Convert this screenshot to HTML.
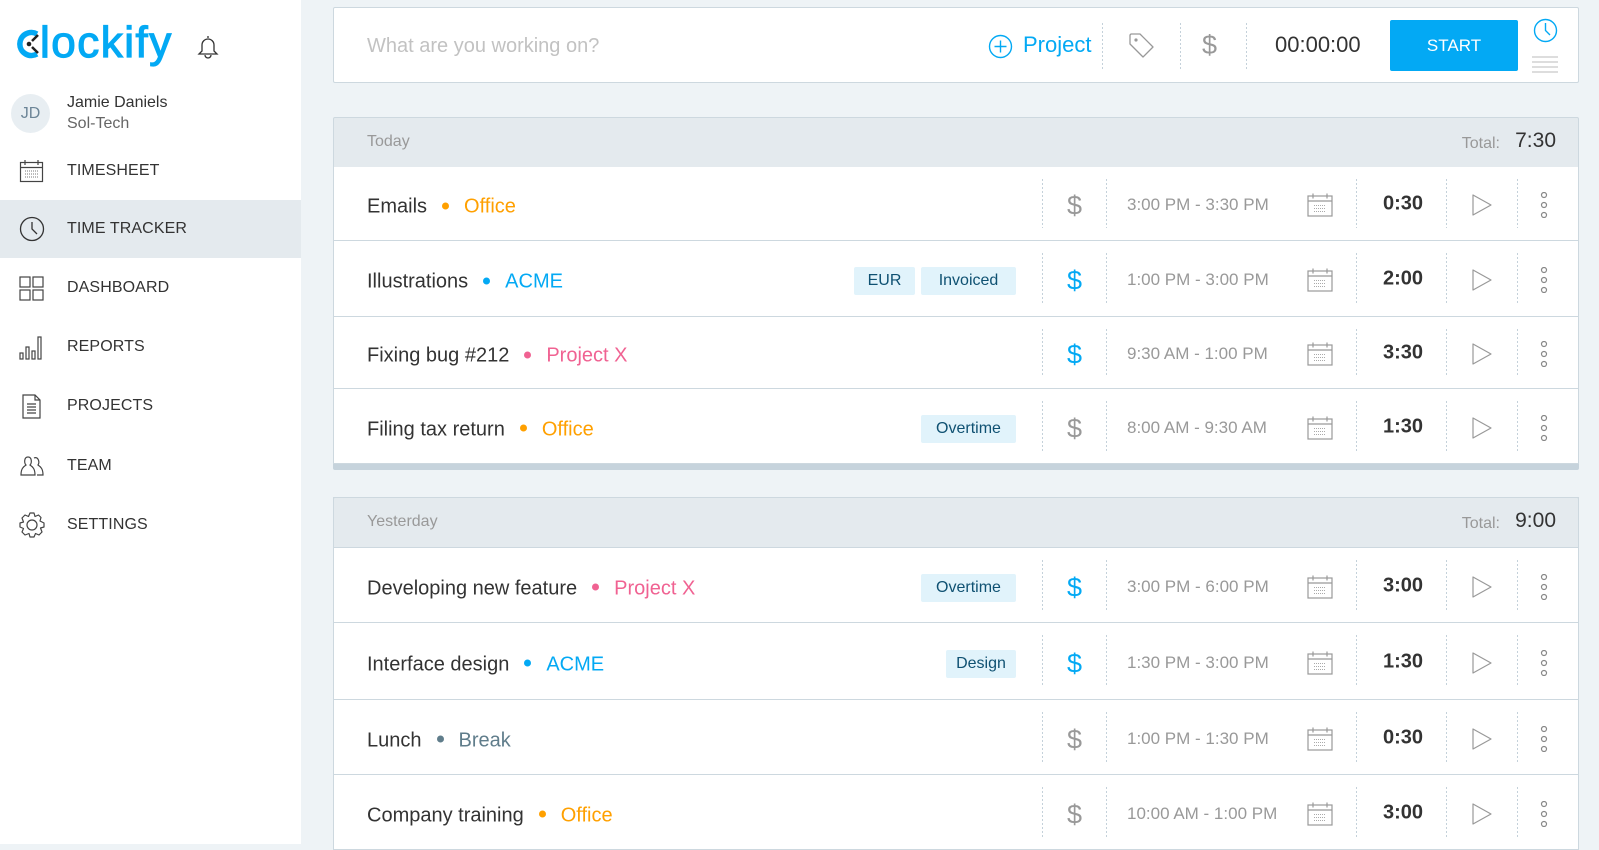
<!DOCTYPE html>
<html><head><meta charset="utf-8">
<style>
*{box-sizing:border-box;margin:0;padding:0}
body{width:1599px;height:844px;overflow:hidden;background:#eef3f6;font-family:"Liberation Sans",sans-serif;position:relative;color:#333}
.side{position:absolute;left:0;top:0;width:301px;height:844px;background:#fff}
.abs{position:absolute}
.nav{position:absolute;left:0;width:301px;height:58px;display:flex;align-items:center}
.nav span{position:absolute;left:67px;font-size:16px;color:#333;letter-spacing:.1px}
.nav svg{position:absolute;left:19px}
.card{position:absolute;left:333px;width:1246px;background:#fff;border:1px solid #cdd8df}
.hdr{position:absolute;left:333px;width:1246px;height:51px;background:#e4eaee;border:1px solid #cdd8df;border-radius:2px 2px 0 0}
.hdr .t{position:absolute;left:33px;top:15px;font-size:16px;color:#999}
.hdr .tot{position:absolute;right:78px;top:17px;font-size:16px;color:#999}
.hdr .tv{position:absolute;right:22px;top:11px;font-size:21px;color:#333}
.row{position:absolute;left:333px;width:1246px;background:#fff;border:1px solid #cdd8df;border-top:none}
.row .d{position:absolute;left:33px;font-size:20px;color:#333;white-space:nowrap;transform:translateY(-50%)}
.dot{display:inline-block;width:7px;height:7px;border-radius:50%;margin:0 15px 3px 15px;vertical-align:middle}
.vd{position:absolute;top:12px;bottom:12px;width:1px;background:repeating-linear-gradient(to bottom,#c4d1da 0 2px,transparent 2px 4px)}
.tm{position:absolute;left:793px;font-size:17px;color:#999;transform:translateY(-50%);white-space:nowrap}
.dur{position:absolute;left:1023px;width:92px;text-align:center;font-size:20px;font-weight:bold;color:#333;transform:translateY(-50%)}
.tag{position:absolute;height:28px;line-height:28px;background:#e1f3fb;color:#0f5172;font-size:16px;text-align:center;border-radius:2px;transform:translateY(-50%)}
.ic{position:absolute;transform:translateY(-50%)}
</style></head><body>
<div class="side">
  <div class="abs" style="left:15px;top:18px;font-size:44px;color:#03a9f4;letter-spacing:1.5px;white-space:nowrap">
    <svg width="28" height="30" viewBox="0 0 28 30" style="vertical-align:-2px;margin-right:-3px"><path d="M22 5 A11.5 11.5 0 1 0 22 25" fill="none" stroke="#03a9f4" stroke-width="5.5"/><circle cx="14" cy="15" r="2.3" fill="#222"/><path d="M17 12 L23 6 M17 18 L23 24" stroke="#222" stroke-width="2.5"/></svg><span style="-webkit-text-stroke:1.2px #03a9f4">lockify</span>
  </div>
  <svg class="abs" style="left:197px;top:34px" width="22" height="25" viewBox="0 0 22 25"><path d="M11 2 V4 M5 17 V11 A6 6 0 0 1 17 11 V17 L20 20 H2 Z M8 21 A3 3 0 0 0 14 21" fill="none" stroke="#333" stroke-width="1.3"/></svg>
  <div class="abs" style="left:11px;top:94px;width:39px;height:39px;border-radius:50%;background:#e8eef2;color:#6c8597;font-size:16px;text-align:center;line-height:39px">JD</div>
  <div class="abs" style="left:67px;top:94px;font-size:16px;color:#333">Jamie Daniels</div>
  <div class="abs" style="left:67px;top:115px;font-size:16px;color:#666">Sol-Tech</div>
  <div class="nav" style="top:142px"><svg width="25" height="24" viewBox="0 0 25 24"><rect x="1.5" y="3.5" width="22" height="19" fill="none" stroke="#444" stroke-width="1.2"/><path d="M1.5 8.5H23.5M6 1V6M19 1V6" stroke="#444" stroke-width="1.2"/><path d="M6 12h13M6 15h13M6 18h13" stroke="#777" stroke-width="1" stroke-dasharray="1 1"/></svg><span>TIMESHEET</span></div>
  <div class="nav" style="top:200px;background:#e4eaee"><svg width="26" height="26" viewBox="0 0 26 26"><circle cx="13" cy="13" r="11.5" fill="none" stroke="#333" stroke-width="1.3"/><path d="M13 6V13L18 18" fill="none" stroke="#333" stroke-width="1.3"/></svg><span>TIME TRACKER</span></div>
  <div class="nav" style="top:259px"><svg width="25" height="25" viewBox="0 0 25 25"><g fill="none" stroke="#444" stroke-width="1.2"><rect x="1" y="1" width="10" height="10"/><rect x="14" y="1" width="10" height="10"/><rect x="1" y="14" width="10" height="10"/><rect x="14" y="14" width="10" height="10"/></g></svg><span>DASHBOARD</span></div>
  <div class="nav" style="top:318px"><svg width="25" height="25" viewBox="0 0 25 25"><g fill="none" stroke="#444" stroke-width="1.2"><rect x="1" y="18" width="3" height="6"/><rect x="7" y="12" width="3" height="12"/><rect x="13" y="16" width="3" height="8"/><rect x="19" y="2" width="3" height="22"/></g></svg><span>REPORTS</span></div>
  <div class="nav" style="top:377px"><svg width="25" height="25" viewBox="0 0 25 25"><path d="M4 1H16L21 6V24H4Z M16 1V6H21 M8 10H17M8 13H17M8 16H17M8 19H17" fill="none" stroke="#444" stroke-width="1.2"/></svg><span>PROJECTS</span></div>
  <div class="nav" style="top:437px"><svg width="26" height="24" viewBox="0 0 26 24"><path d="M9 3C5 3 5 9 7 11C4 13 2 15 2 21H16C16 15 14 13 11 11C13 9 13 3 9 3Z M15 4C19 2 21 8 19 11C22 13 24 15 24 21H18" fill="none" stroke="#444" stroke-width="1.2"/></svg><span>TEAM</span></div>
  <div class="nav" style="top:496px"><svg width="26" height="26" viewBox="0 0 26 26"><circle cx="13" cy="13" r="5" fill="none" stroke="#444" stroke-width="1.2"/><path d="M11 1H15L16 4.5L19.5 3L22 5.5L21 9L25 11V15L21.5 16L23 20L20 23L16.5 21.5L15 25H11L10 21.5L6 23L3 20L4.5 16.5L1 15V11L4.5 10L3 6L6 3L9.5 4.5Z" fill="none" stroke="#444" stroke-width="1.2" stroke-linejoin="round"/></svg><span>SETTINGS</span></div>
</div>

<!-- top input -->
<div class="card" style="top:7px;height:76px;border-radius:2px">
  <div class="abs" style="left:33px;top:27px;font-size:20px;color:#c2c2c2">What are you working on?</div>
  <svg class="abs" style="left:654px;top:26px" width="25" height="25" viewBox="0 0 25 25"><circle cx="12.5" cy="12.5" r="11" fill="none" stroke="#03a9f4" stroke-width="1.4"/><path d="M12.5 6.5V18.5M6.5 12.5H18.5" stroke="#03a9f4" stroke-width="1.4"/></svg>
  <div class="abs" style="left:689px;top:24px;font-size:22px;color:#03a9f4">Project</div>
  <div class="vd" style="left:768px;top:15px;bottom:12px"></div>
  <svg class="abs" style="left:794px;top:24px" width="28" height="28" viewBox="0 0 28 28"><path d="M2 3V12L15 25L25 15L12 2H3Z" fill="none" stroke="#999" stroke-width="1.3" stroke-linejoin="round"/><circle cx="8" cy="8" r="1.6" fill="#999"/></svg>
  <div class="vd" style="left:846px;top:15px;bottom:12px"></div>
  <div class="abs" style="left:868px;top:22px;font-size:27px;color:#999">$</div>
  <div class="vd" style="left:912px;top:15px;bottom:12px"></div>
  <div class="abs" style="left:941px;top:24px;font-size:22px;color:#333">00:00:00</div>
  <div class="abs" style="left:1056px;top:12px;width:128px;height:51px;background:#03a9f4;border-radius:2px;color:#fff;font-size:17px;text-align:center;line-height:51px">START</div>
  <svg class="abs" style="left:1199px;top:10px" width="25" height="25" viewBox="0 0 25 25"><circle cx="12.5" cy="12.5" r="11" fill="none" stroke="#03a9f4" stroke-width="1.4"/><path d="M12.5 5V12.5L17 17" fill="none" stroke="#03a9f4" stroke-width="1.4"/></svg>
  <svg class="abs" style="left:1198px;top:48px" width="26" height="18" viewBox="0 0 26 18"><path d="M0 1H26M0 6H26M0 11H26M0 16H26" stroke="#bbb" stroke-width="1"/></svg>
</div>

<!-- Today -->
<div class="hdr" style="top:117px"><div class="t">Today</div><div class="tot">Total:</div><div class="tv">7:30</div></div>
<div class="abs" style="left:333px;top:464px;width:1246px;height:6px;background:#c6d3dc;border-radius:0 0 2px 2px"></div>
<div class="abs" style="left:333px;top:497px;width:1246px;height:350px;background:#cdd8df"></div>
<div class="hdr" style="top:497px"><div class="t">Yesterday</div><div class="tot">Total:</div><div class="tv">9:00</div></div>

<script>
const rows=[
[167,74,"Emails","#ffa000","Office",[],false,"3:00 PM - 3:30 PM","0:30"],
[241,76,"Illustrations","#03a9f4","ACME",[["EUR",520,61],["Invoiced",587,95]],true,"1:00 PM - 3:00 PM","2:00"],
[317,72,"Fixing bug #212","#f06292","Project X",[],true,"9:30 AM - 1:00 PM","3:30"],
[389,75,"Filing tax return","#ffa000","Office",[["Overtime",587,95]],false,"8:00 AM - 9:30 AM","1:30"],
[548,75,"Developing new feature","#f06292","Project X",[["Overtime",587,95]],true,"3:00 PM - 6:00 PM","3:00"],
[623,77,"Interface design","#03a9f4","ACME",[["Design",612,70]],true,"1:30 PM - 3:00 PM","1:30"],
[700,75,"Lunch","#607d8b","Break",[],false,"1:00 PM - 1:30 PM","0:30"],
[775,75,"Company training","#ffa000","Office",[],false,"10:00 AM - 1:00 PM","3:00"]];
let h="";
for(const r of rows){
 const [top,ht,d,c,p,tags,bill,tm,dur]=r;const cy=ht/2+3;
 h+=`<div class="row" style="top:${top}px;height:${ht}px">`;
 h+=`<div class="d" style="top:${cy}px">${d}<span class="dot" style="background:${c}"></span><span style="color:${c}">${p}</span></div>`;
 for(const t of tags)h+=`<div class="tag" style="left:${t[1]}px;width:${t[2]}px;top:${cy-1}px">${t[0]}</div>`;
 h+=`<div class="vd" style="left:708px"></div><div class="ic" style="left:733px;top:${cy-1}px;font-size:27px;color:${bill?'#03a9f4':'#999'}">$</div><div class="vd" style="left:772px"></div>`;
 h+=`<div class="tm" style="top:${cy-2}px">${tm}</div>`;
 h+=`<svg class="ic" style="left:973px;top:${cy-2}px" width="26" height="25" viewBox="0 0 26 25"><rect x="1" y="3.5" width="24" height="20" fill="none" stroke="#999" stroke-width="1.2"/><path d="M1 8.5H25M6 1V6M20 1V6" stroke="#999" stroke-width="1.2"/><path d="M7 13h12M7 16h12M7 19h12" stroke="#aaa" stroke-width="1" stroke-dasharray="1 1"/></svg>`;
 h+=`<div class="vd" style="left:1022px"></div><div class="dur" style="top:${cy-3}px">${dur}</div><div class="vd" style="left:1112px"></div>`;
 h+=`<svg class="ic" style="left:1138px;top:${cy-2}px" width="20" height="22" viewBox="0 0 20 22"><path d="M1 1L19 11L1 21Z" fill="none" stroke="#999" stroke-width="1.2" stroke-linejoin="round"/></svg><div class="vd" style="left:1183px"></div>`;
 h+=`<svg class="ic" style="left:1206px;top:${cy-2}px" width="8" height="26" viewBox="0 0 8 26"><g fill="none" stroke="#888" stroke-width="1.2"><circle cx="4" cy="3" r="2.5"/><circle cx="4" cy="13" r="2.5"/><circle cx="4" cy="23" r="2.5"/></g></svg>`;
 h+=`</div>`;
}
document.write(h);
</script>
</body></html>
